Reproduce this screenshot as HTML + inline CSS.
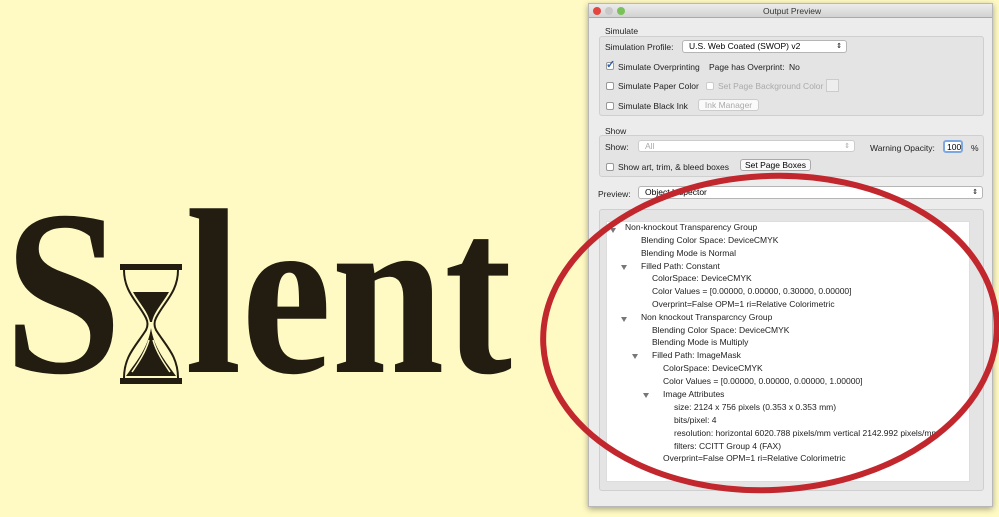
<!DOCTYPE html>
<html><head><meta charset="utf-8"><style>
*{margin:0;padding:0;box-sizing:border-box}
body{width:999px;height:517px;background:#fffac4;position:relative;overflow:hidden;font-family:"Liberation Sans",sans-serif}
.a{position:absolute;white-space:nowrap}
.L{position:absolute;font-family:"Liberation Serif",serif;font-weight:bold;color:#221d10;line-height:1}
.win{position:absolute;left:588px;top:3px;width:405px;height:504px;background:#ececec;box-shadow:0 2px 6px rgba(0,0,0,.35);border:1px solid #b8b8b8}
.t{position:absolute;font-size:8.5px;color:#222;white-space:nowrap}
.box{position:absolute;border:1px solid #cfcfcf;background:#e4e4e4;border-radius:3px}
.dd{position:absolute;background:#fff;border:1px solid #b5b5b5;border-radius:3px;font-size:8.5px;padding-left:6px;line-height:11px}
.cb{position:absolute;width:8px;height:8px;border:1px solid #999;background:#fff;border-radius:2px}
.btn{position:absolute;background:#fafafa;border:1px solid #aaa;border-radius:3px;font-size:8.5px;text-align:center;line-height:11px}
.tri{position:absolute;width:0;height:0;border-left:3px solid transparent;border-right:3px solid transparent;border-top:5px solid #777}
</style></head><body>
<div class="L" style="left:4px;top:176px;font-size:236px;transform:scaleX(.9);transform-origin:0 0">S</div>
<svg class="a" style="left:118px;top:262px" width="66" height="124" viewBox="0 0 66 124">
<rect x="2" y="2" width="62" height="6" fill="#221d10"/>
<rect x="2" y="116" width="62" height="6" fill="#221d10"/>
<path d="M6 8 C6 30 20 40 28 56 C30 60 30 64 28 68 C18 84 6 94 6 116 M60 8 C60 30 46 40 38 56 C36 60 36 64 38 68 C48 84 60 94 60 116" stroke="#221d10" stroke-width="2" fill="none"/>
<path d="M15 30 L51 30 C44 42 36 50 34 60 L32 60 C30 50 22 42 15 30Z" fill="#221d10"/>
<path d="M33 66 C30 86 18 100 8 114 L58 114 C48 100 36 86 33 66Z" fill="#221d10"/>
<path d="M31 78 C27 92 18 104 14 110 M35 78 C39 92 48 104 52 110" stroke="#fffac4" stroke-width="1.5" fill="none"/>
</svg>
<div class="L" style="left:185px;top:176px;font-size:236px;transform:scaleX(.86);transform-origin:0 0">lent</div>

<div class="win">
<div class="a" style="left:0;top:0;width:403px;height:14px;background:linear-gradient(#ececec,#d2d2d2);border-bottom:1px solid #aaa"></div>
<div class="a" style="left:4px;top:3px;width:8px;height:8px;border-radius:50%;background:#e2463f"></div>
<div class="a" style="left:16px;top:3px;width:8px;height:8px;border-radius:50%;background:#c8c8c8"></div>
<div class="a" style="left:28px;top:3px;width:8px;height:8px;border-radius:50%;background:#7ac15b"></div>
<div class="t" style="left:174px;top:2px;color:#333">Output Preview</div>

<div class="t" style="left:16px;top:22px">Simulate</div>
<div class="box" style="left:10px;top:32px;width:385px;height:80px"></div>
<div class="t" style="left:16px;top:38px">Simulation Profile:</div>
<div class="dd" style="left:93px;top:36px;width:165px;height:13px">U.S. Web Coated (SWOP) v2<span style="position:absolute;right:4px;font-size:7px">⇕</span></div>
<div class="cb" style="left:17px;top:58px;background:#fff"></div><div class="t" style="left:17px;top:54px;font-size:11px;color:#2f5fa8;font-weight:bold">✓</div>
<div class="t" style="left:29px;top:58px">Simulate Overprinting</div>
<div class="t" style="left:120px;top:58px">Page has Overprint:</div>
<div class="t" style="left:200px;top:58px">No</div>
<div class="cb" style="left:17px;top:78px"></div><div class="t" style="left:29px;top:77px">Simulate Paper Color</div>
<div class="cb" style="left:117px;top:78px;border-color:#ccc"></div><div class="t" style="left:129px;top:77px;color:#aaa">Set Page Background Color</div>
<div class="a" style="left:237px;top:75px;width:13px;height:13px;border:1px solid #ccc;background:#eee"></div>
<div class="cb" style="left:17px;top:98px"></div><div class="t" style="left:29px;top:97px">Simulate Black Ink</div>
<div class="btn" style="left:109px;top:95px;width:61px;height:12px;color:#aaa;border-color:#ccc">Ink Manager</div>

<div class="t" style="left:16px;top:122px">Show</div>
<div class="box" style="left:10px;top:131px;width:385px;height:42px"></div>
<div class="t" style="left:16px;top:138px">Show:</div>
<div class="dd" style="left:49px;top:136px;width:217px;height:12px;color:#aaa;border-color:#ccc">All<span style="position:absolute;right:4px;font-size:7px">⇕</span></div>
<div class="t" style="left:281px;top:139px">Warning Opacity:</div>
<div class="dd" style="left:354px;top:136px;width:20px;height:13px;border:2px solid #7ca7e0;padding-left:2px">100</div>
<div class="t" style="left:382px;top:139px">%</div>
<div class="cb" style="left:17px;top:159px"></div><div class="t" style="left:29px;top:158px">Show art, trim, &amp; bleed boxes</div>
<div class="btn" style="left:151px;top:155px;width:71px;height:12px">Set Page Boxes</div>

<div class="t" style="left:9px;top:185px">Preview:</div>
<div class="dd" style="left:49px;top:182px;width:345px;height:13px">Object Inspector<span style="position:absolute;right:4px;font-size:7px">⇕</span></div>

<div class="box" style="left:10px;top:205px;width:385px;height:282px"></div>
<div class="a" style="left:17px;top:217px;width:364px;height:261px;background:#fff;border:1px solid #ddd"></div>
</div>

<div class="tri" style="left:610px;top:228px"></div>
<div class="tri" style="left:621px;top:265px"></div>
<div class="tri" style="left:621px;top:317px"></div>
<div class="tri" style="left:632px;top:354px"></div>
<div class="tri" style="left:643px;top:393px"></div>
<div class="t" style="left:625px;top:222px">Non-knockout Transparency Group</div>
<div class="t" style="left:641px;top:235px">Blending Color Space: DeviceCMYK</div>
<div class="t" style="left:641px;top:248px">Blending Mode is Normal</div>
<div class="t" style="left:641px;top:261px">Filled Path: Constant</div>
<div class="t" style="left:652px;top:273px">ColorSpace: DeviceCMYK</div>
<div class="t" style="left:652px;top:286px">Color Values = [0.00000, 0.00000, 0.30000, 0.00000]</div>
<div class="t" style="left:652px;top:299px">Overprint=False OPM=1 ri=Relative Colorimetric</div>
<div class="t" style="left:641px;top:312px">Non knockout Transparcncy Group</div>
<div class="t" style="left:652px;top:325px">Blending Color Space: DeviceCMYK</div>
<div class="t" style="left:652px;top:337px">Blending Mode is Multiply</div>
<div class="t" style="left:652px;top:350px">Filled Path: ImageMask</div>
<div class="t" style="left:663px;top:363px">ColorSpace: DeviceCMYK</div>
<div class="t" style="left:663px;top:376px">Color Values = [0.00000, 0.00000, 0.00000, 1.00000]</div>
<div class="t" style="left:663px;top:389px">Image Attributes</div>
<div class="t" style="left:674px;top:402px">size: 2124 x 756 pixels (0.353 x 0.353 mm)</div>
<div class="t" style="left:674px;top:415px">bits/pixel: 4</div>
<div class="t" style="left:674px;top:428px">resolution: horizontal 6020.788 pixels/mm vertical 2142.992 pixels/mm</div>
<div class="t" style="left:674px;top:441px">filters: CCITT Group 4 (FAX)</div>
<div class="t" style="left:663px;top:453px">Overprint=False OPM=1 ri=Relative Colorimetric</div>

<svg class="a" style="left:0;top:0" width="999" height="517"><ellipse cx="770" cy="333" rx="227" ry="157" fill="none" stroke="#c1272d" stroke-width="6" transform="rotate(-3 770 333)"/></svg>
</body></html>
